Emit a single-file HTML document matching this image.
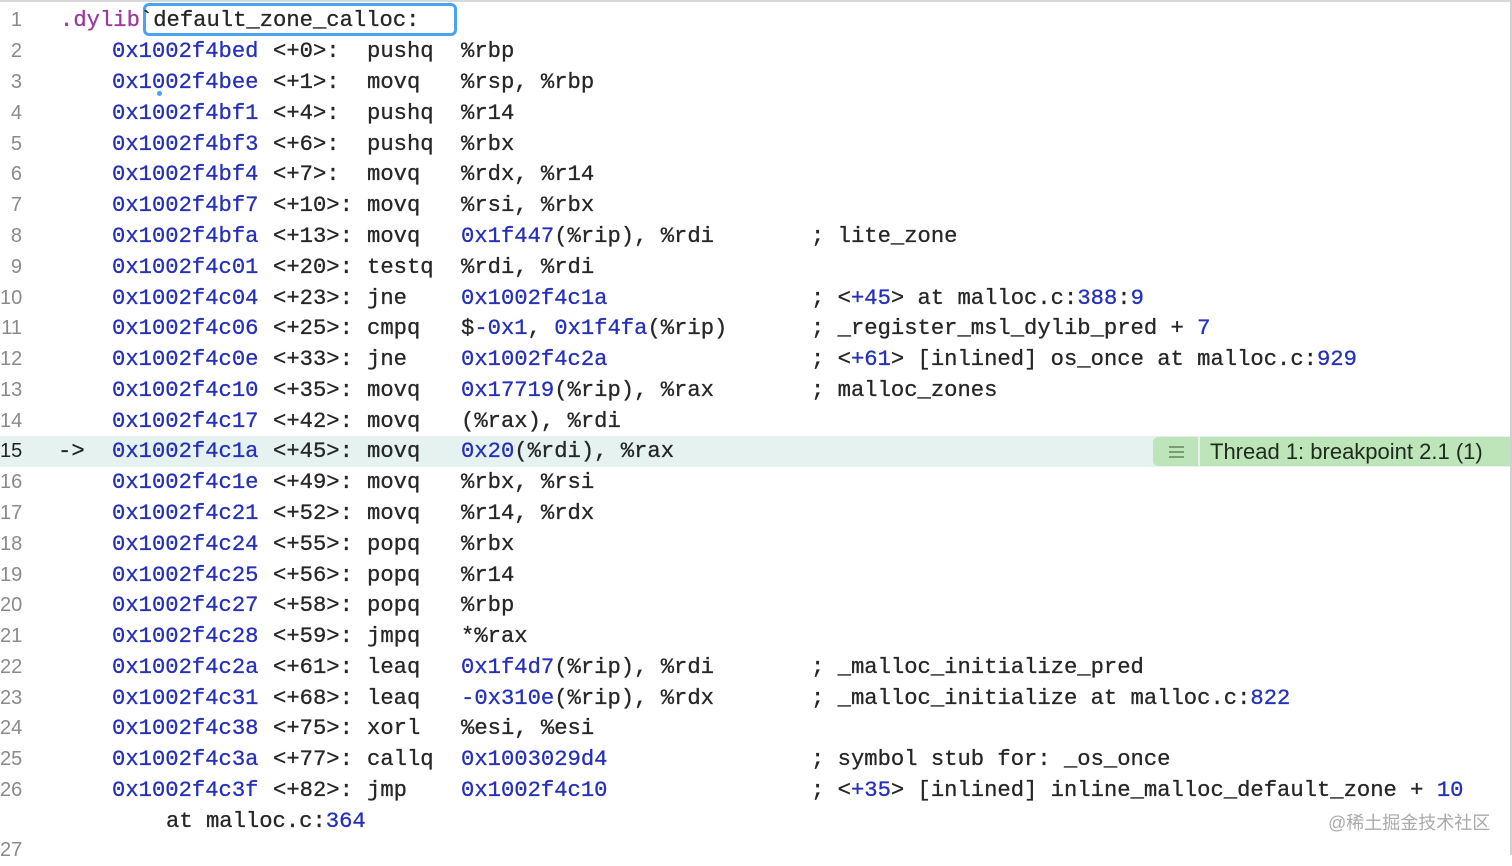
<!DOCTYPE html>
<html><head><meta charset="utf-8"><style>
body{margin:0;width:1512px;height:855px;background:#fff;overflow:hidden;position:relative;font-family:"Liberation Mono",monospace;font-size:22.2px;color:#262626}
.top{position:absolute;left:0;top:0;width:1512px;height:2px;background:#d8d8d8}
.rb{position:absolute;right:0;top:0;width:2px;height:855px;background:#d0d0d0}
.l{position:absolute;left:0;height:31px;line-height:31px;width:1510px;white-space:pre;-webkit-text-stroke:0.3px currentColor}
.n{position:absolute;left:0;width:22px;text-align:right;color:#8a8a8a;font-family:"Liberation Sans",sans-serif;font-size:20px;-webkit-text-stroke:0}
.a{position:absolute;left:112px;color:#2530b8}
.o{position:absolute;left:273px}
.m{position:absolute;left:367px}
.p{position:absolute;left:461px}
.c{position:absolute;left:811px}
b{font-weight:normal;color:#2530b8}
.hl{background:#e5f2f0}
.badge{position:absolute;left:1153px;top:0;height:29px;width:357px;background:#bde5b9;border-radius:5px 0 0 5px;font-family:"Liberation Sans",sans-serif;font-size:22px;color:#1d2a1d;-webkit-text-stroke:0}
.badge .ic{position:absolute;left:0;width:45px;height:29px;border-right:2px solid #e5f2f0}
.badge .ic i{position:absolute;left:16px;width:15px;height:1.5px;background:#7a9a7a}
.badge span{position:absolute;left:57px;line-height:29px}
.box{position:absolute;left:143px;top:3px;width:308px;height:27px;border:3px solid #4aa3f0;border-radius:6px}
.wm{position:absolute;left:1328px;top:809px;font-family:"Liberation Sans","Noto Sans CJK SC",sans-serif;font-size:18px;color:#aaa}
</style></head><body>
<div class="top"></div><div class="rb"></div>
<div class="box"></div>
<div class="l" style="top:5px"><span class="n">1</span><span style="position:absolute;left:60px"><span style="color:#9b3aa0">.dylib</span>`default_zone_calloc:</span></div>
<div class="l" style="top:36px"><span class="n">2</span><span class="a">0x1002f4bed</span><span class="o">&lt;+0&gt;:</span><span class="m">pushq</span><span class="p">%rbp</span></div>
<div class="l" style="top:67px"><span class="n">3</span><span class="a">0x1002f4bee</span><span class="o">&lt;+1&gt;:</span><span class="m">movq</span><span class="p">%rsp, %rbp</span></div>
<div style="position:absolute;left:157px;top:91px;width:5px;height:5px;border-radius:50%;background:#4aa3f0"></div>
<div class="l" style="top:98px"><span class="n">4</span><span class="a">0x1002f4bf1</span><span class="o">&lt;+4&gt;:</span><span class="m">pushq</span><span class="p">%r14</span></div>
<div class="l" style="top:129px"><span class="n">5</span><span class="a">0x1002f4bf3</span><span class="o">&lt;+6&gt;:</span><span class="m">pushq</span><span class="p">%rbx</span></div>
<div class="l" style="top:159px"><span class="n">6</span><span class="a">0x1002f4bf4</span><span class="o">&lt;+7&gt;:</span><span class="m">movq</span><span class="p">%rdx, %r14</span></div>
<div class="l" style="top:190px"><span class="n">7</span><span class="a">0x1002f4bf7</span><span class="o">&lt;+10&gt;:</span><span class="m">movq</span><span class="p">%rsi, %rbx</span></div>
<div class="l" style="top:221px"><span class="n">8</span><span class="a">0x1002f4bfa</span><span class="o">&lt;+13&gt;:</span><span class="m">movq</span><span class="p"><b>0x1f447</b>(%rip), %rdi</span><span class="c">; lite_zone</span></div>
<div class="l" style="top:252px"><span class="n">9</span><span class="a">0x1002f4c01</span><span class="o">&lt;+20&gt;:</span><span class="m">testq</span><span class="p">%rdi, %rdi</span></div>
<div class="l" style="top:283px"><span class="n">10</span><span class="a">0x1002f4c04</span><span class="o">&lt;+23&gt;:</span><span class="m">jne</span><span class="p"><b>0x1002f4c1a</b></span><span class="c">; &lt;<b>+45</b>&gt; at malloc.c:<b>388</b>:<b>9</b></span></div>
<div class="l" style="top:313px"><span class="n">11</span><span class="a">0x1002f4c06</span><span class="o">&lt;+25&gt;:</span><span class="m">cmpq</span><span class="p">$<b>-0x1</b>, <b>0x1f4fa</b>(%rip)</span><span class="c">; _register_msl_dylib_pred + <b>7</b></span></div>
<div class="l" style="top:344px"><span class="n">12</span><span class="a">0x1002f4c0e</span><span class="o">&lt;+33&gt;:</span><span class="m">jne</span><span class="p"><b>0x1002f4c2a</b></span><span class="c">; &lt;<b>+61</b>&gt; [inlined] os_once at malloc.c:<b>929</b></span></div>
<div class="l" style="top:375px"><span class="n">13</span><span class="a">0x1002f4c10</span><span class="o">&lt;+35&gt;:</span><span class="m">movq</span><span class="p"><b>0x17719</b>(%rip), %rax</span><span class="c">; malloc_zones</span></div>
<div class="l" style="top:406px"><span class="n">14</span><span class="a">0x1002f4c17</span><span class="o">&lt;+42&gt;:</span><span class="m">movq</span><span class="p">(%rax), %rdi</span></div>
<div class="l hl" style="top:436px"><span class="n" style="color:#222">15</span><span style="position:absolute;left:58px">-&gt;</span><span class="a">0x1002f4c1a</span><span class="o">&lt;+45&gt;:</span><span class="m">movq</span><span class="p"><b>0x20</b>(%rdi), %rax</span><div class="badge" style="top:1px"><div class="ic"><i style="top:9px"></i><i style="top:14px"></i><i style="top:19px"></i></div><span>Thread 1: breakpoint 2.1 (1)</span></div></div>
<div class="l" style="top:467px"><span class="n">16</span><span class="a">0x1002f4c1e</span><span class="o">&lt;+49&gt;:</span><span class="m">movq</span><span class="p">%rbx, %rsi</span></div>
<div class="l" style="top:498px"><span class="n">17</span><span class="a">0x1002f4c21</span><span class="o">&lt;+52&gt;:</span><span class="m">movq</span><span class="p">%r14, %rdx</span></div>
<div class="l" style="top:529px"><span class="n">18</span><span class="a">0x1002f4c24</span><span class="o">&lt;+55&gt;:</span><span class="m">popq</span><span class="p">%rbx</span></div>
<div class="l" style="top:560px"><span class="n">19</span><span class="a">0x1002f4c25</span><span class="o">&lt;+56&gt;:</span><span class="m">popq</span><span class="p">%r14</span></div>
<div class="l" style="top:590px"><span class="n">20</span><span class="a">0x1002f4c27</span><span class="o">&lt;+58&gt;:</span><span class="m">popq</span><span class="p">%rbp</span></div>
<div class="l" style="top:621px"><span class="n">21</span><span class="a">0x1002f4c28</span><span class="o">&lt;+59&gt;:</span><span class="m">jmpq</span><span class="p">*%rax</span></div>
<div class="l" style="top:652px"><span class="n">22</span><span class="a">0x1002f4c2a</span><span class="o">&lt;+61&gt;:</span><span class="m">leaq</span><span class="p"><b>0x1f4d7</b>(%rip), %rdi</span><span class="c">; _malloc_initialize_pred</span></div>
<div class="l" style="top:683px"><span class="n">23</span><span class="a">0x1002f4c31</span><span class="o">&lt;+68&gt;:</span><span class="m">leaq</span><span class="p"><b>-0x310e</b>(%rip), %rdx</span><span class="c">; _malloc_initialize at malloc.c:<b>822</b></span></div>
<div class="l" style="top:713px"><span class="n">24</span><span class="a">0x1002f4c38</span><span class="o">&lt;+75&gt;:</span><span class="m">xorl</span><span class="p">%esi, %esi</span></div>
<div class="l" style="top:744px"><span class="n">25</span><span class="a">0x1002f4c3a</span><span class="o">&lt;+77&gt;:</span><span class="m">callq</span><span class="p"><b>0x1003029d4</b></span><span class="c">; symbol stub for: _os_once</span></div>
<div class="l" style="top:775px"><span class="n">26</span><span class="a">0x1002f4c3f</span><span class="o">&lt;+82&gt;:</span><span class="m">jmp</span><span class="p"><b>0x1002f4c10</b></span><span class="c">; &lt;<b>+35</b>&gt; [inlined] inline_malloc_default_zone + <b>10</b></span></div>
<div class="l" style="top:806px"><span style="position:absolute;left:166px">at malloc.c:<b>364</b></span></div>
<div class="l" style="top:835px"><span class="n">27</span></div>
<div class="wm">@稀土掘金技术社区</div>
</body></html>
